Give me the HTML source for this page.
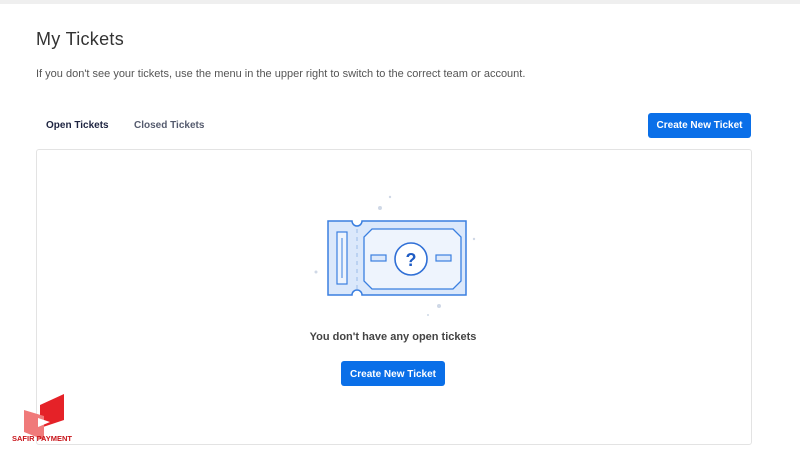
<!DOCTYPE html>
<html><head><style>
*{margin:0;padding:0;box-sizing:border-box}
body{width:800px;height:450px;background:#fff;font-family:"Liberation Sans",sans-serif;position:relative;overflow:hidden}
.top{position:absolute;left:0;top:0;width:800px;height:4px;background:#efefef}
h1{position:absolute;left:36px;top:29px;font-size:18px;font-weight:normal;color:#333;letter-spacing:0.3px}
.sub{position:absolute;left:36px;top:68px;font-size:11px;color:#555}
.tab{position:absolute;top:120px;font-size:10px;font-weight:bold}
.btn{position:absolute;background:#0a6fe8;color:#fff;font-size:10px;font-weight:bold;text-align:center;border-radius:3px}
.panel{position:absolute;left:36px;top:149px;width:716px;height:296px;border:1px solid #e3e3e3;border-radius:3px}
.msg{position:absolute;left:0;width:786px;text-align:center;top:331px;font-size:11px;font-weight:bold;color:#444}
</style></head><body>
<div class="top"></div>
<h1>My Tickets</h1>
<div class="sub">If you don't see your tickets, use the menu in the upper right to switch to the correct team or account.</div>
<div class="tab" style="left:46px;color:#1d2340">Open Tickets</div>
<div class="tab" style="left:134px;color:#555b6e">Closed Tickets</div>
<div class="btn" style="left:648px;top:113px;width:103px;height:25px;line-height:26px">Create New Ticket</div>
<div class="panel"></div>
<svg style="position:absolute;left:0;top:0" width="800" height="450">
<g fill="#cfd8e6"><circle cx="390" cy="197" r="1.2"/><circle cx="380" cy="208" r="2"/><circle cx="474" cy="239" r="1.2"/><circle cx="316" cy="272" r="1.5"/><circle cx="439" cy="306" r="2"/><circle cx="428" cy="315" r="1"/></g>
<path d="M328 221H352A5 5 0 0 0 362 221H466V295H362A5 5 0 0 0 352 295H328Z" fill="#dbe8fb" stroke="#3a7fe0" stroke-width="1.5"/>
<path d="M372 229H453L461 237V281L453 289H372L364 281V237Z" fill="#eef4fd" stroke="#3a7fe0" stroke-width="1.3"/>
<rect x="337" y="232" width="10" height="52" fill="#eef4fd" stroke="#3a7fe0" stroke-width="1.2"/>
<line x1="342" y1="238" x2="342" y2="278" stroke="#3a7fe0" stroke-width="1"/>
<line x1="357" y1="229" x2="357" y2="289" stroke="#9bbbe9" stroke-width="1" stroke-dasharray="4 4"/>
<rect x="371" y="255" width="15" height="6" fill="#dbe8fb" stroke="#3a7fe0" stroke-width="1.2"/>
<rect x="436" y="255" width="15" height="6" fill="#dbe8fb" stroke="#3a7fe0" stroke-width="1.2"/>
<circle cx="411" cy="259" r="16" fill="#fff" stroke="#2f6fd6" stroke-width="1.6"/>
<text x="411" y="266" text-anchor="middle" font-family="Liberation Sans" font-weight="bold" font-size="18" fill="#1f5cc4">?</text>
<path d="M40 405L64 394V420L40 428Z" fill="#e52228"/>
<path d="M24 410L44 416V440L24 432Z" fill="#f07a7a"/>
<path d="M38 418L50 422L38 427Z" fill="#fff"/>
<text x="12" y="441" font-family="Liberation Sans" font-weight="bold" font-size="7.5" fill="#c8141a">SAFIR PAYMENT</text>
</svg>
<div class="msg">You don't have any open tickets</div>
<div class="btn" style="left:341px;top:361px;width:104px;height:25px;line-height:27px">Create New Ticket</div>
</body></html>
